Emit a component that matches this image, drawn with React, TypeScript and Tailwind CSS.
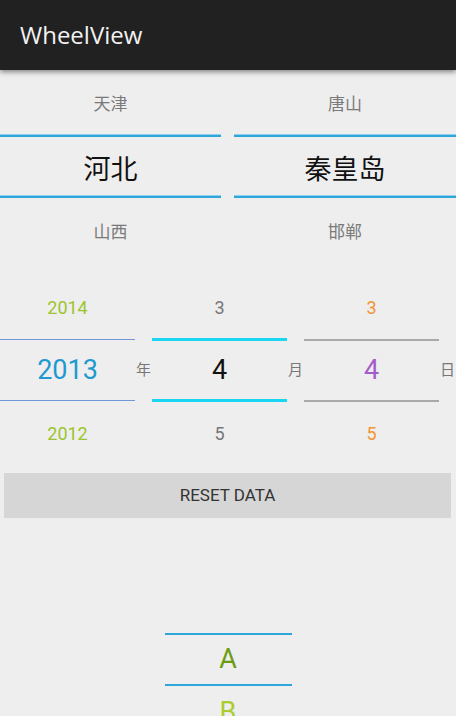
import React from "react";

const cjk = { fontFamily: "Roboto, 'Noto Sans CJK SC', sans-serif" };

function TopWheel({ top, mid, bottom }: { top: string; mid: string; bottom: string }) {
  return (
    <div className="flex flex-col">
      <div className="h-[64px] shrink-0 flex items-center justify-center pt-[6px] text-[17px] text-[#7a7a7a]">{top}</div>
      <div className="h-[3px] shrink-0 bg-[#2fa6da] border-t border-[#8fd0ee]" />
      <div className="h-[58px] shrink-0 flex items-center justify-center pt-[8px] text-[27px] text-[#111]">{mid}</div>
      <div className="h-[3px] shrink-0 bg-[#2fa6da] border-t border-[#8fd0ee]" />
      <div className="h-[62px] shrink-0 flex items-center justify-center pt-[8px] text-[17px] text-[#7a7a7a]">{bottom}</div>
    </div>
  );
}

function DateCol({
  top,
  mid,
  bottom,
  side,
  center,
  line,
}: {
  top: string;
  mid: string;
  bottom: string;
  side: string;
  center: string;
  line: React.ReactNode;
}) {
  return (
    <div className="flex flex-col w-[136px]">
      <div className={`h-[62px] shrink-0 flex items-center justify-center text-[18px] ${side}`}>{top}</div>
      <div className="h-[3px] shrink-0 flex flex-col">{line}</div>
      <div className={`h-[58px] shrink-0 flex items-center justify-center text-[27px] ${center}`}>{mid}</div>
      <div className="h-[3px] shrink-0 flex flex-col">{line}</div>
      <div className={`h-[62px] shrink-0 flex items-center justify-center text-[18px] ${side}`}>{bottom}</div>
    </div>
  );
}

function Label({ t }: { t: string }) {
  return (
    <div className="flex flex-col w-[17px]">
      <div className="h-[65px] shrink-0" />
      <div className="h-[58px] shrink-0 flex items-center justify-center text-[15px] text-[#777]">{t}</div>
    </div>
  );
}

export default function App() {
  return (
    <div className="w-[456px] h-[716px] overflow-hidden bg-[#eeeeee]" style={cjk}>
      <div
        className="h-[70px] bg-[#212121] flex items-center pl-[20px] text-[24px] text-[#f2f2f2] relative z-10 shadow-[0_2px_5px_rgba(0,0,0,0.45)]"
        style={{ fontFamily: "'Open Sans', sans-serif" }}
      >
        WheelView
      </div>

      <div className="flex gap-[13px]">
        <div className="w-[221px]">
          <TopWheel top="天津" mid="河北" bottom="山西" />
        </div>
        <div className="w-[222px]">
          <TopWheel top="唐山" mid="秦皇岛" bottom="邯郸" />
        </div>
      </div>

      <div className="mt-[16px] flex">
        <div className="w-[135px] flex">
          <DateCol
            top="2014"
            mid="2013"
            bottom="2012"
            side="text-[#9cc52c]"
            center="text-[#1e9ad0]"
            line={<div className="mt-[1px] h-[1px] w-[135px] bg-[#6f98d8]" />}
          />
        </div>
        <Label t="年" />
        <DateCol
          top="3"
          mid="4"
          bottom="5"
          side="text-[#777]"
          center="text-[#111]"
          line={<div className="h-[3px] bg-[#1ad6f2]" />}
        />
        <Label t="月" />
        <DateCol
          top="3"
          mid="4"
          bottom="5"
          side="text-[#f29433]"
          center="text-[#a35ccb]"
          line={<div className="mt-[1px] h-[2px] bg-[#a9a9a9]" />}
        />
        <Label t="日" />
      </div>

      <div className="mt-[9px] ml-[4px] w-[447px] h-[45px] bg-[#d6d6d6] flex items-center justify-center text-[17px] text-[#333]">
        RESET DATA
      </div>

      <div className="mt-[63px] mx-auto w-[127px] flex flex-col">
        <div className="h-[52px] shrink-0" />
        <div className="h-[2px] shrink-0 bg-[#2fa6da]" />
        <div className="h-[49px] shrink-0 flex items-center justify-center text-[27px] text-[#6b9c10]">A</div>
        <div className="h-[2px] shrink-0 bg-[#2fa6da]" />
        <div className="h-[52px] shrink-0 flex items-center justify-center text-[27px] text-[#a9cd2e]">B</div>
      </div>
    </div>
  );
}
